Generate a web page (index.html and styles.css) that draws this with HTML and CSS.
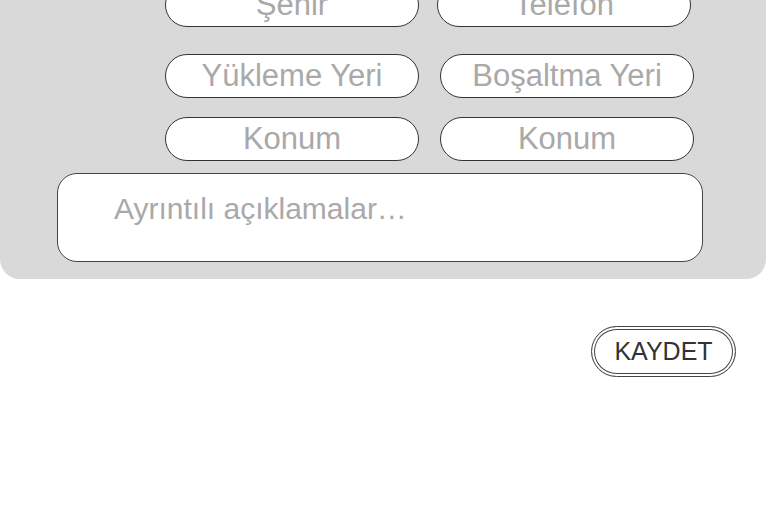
FILE: index.html
```html
<!DOCTYPE html>
<html lang="tr">
<head>
    <meta charset="UTF-8">
    <meta name="viewport" content="width=device-width, initial-scale=1.0">
    <title>Yük Kaydı</title>
    <link rel="stylesheet" href="styles.css">
</head>
<body>
    <!-- Form panel, scrolled so the first row is cut off at the top -->
    <div class="panel">
        <div class="pill-row first">
            <div class="pill">Şehir</div>
            <div class="pill">Telefon</div>
        </div>
        <div class="pill-row second">
            <div class="pill">Yükleme Yeri</div>
            <div class="pill">Boşaltma Yeri</div>
        </div>
        <div class="pill-row third">
            <div class="pill">Konum</div>
            <div class="pill">Konum</div>
        </div>
        <div class="details">Ayrıntılı açıklamalar…</div>
    </div>

    <div class="actions">
        <button class="save-btn">KAYDET</button>
    </div>
</body>
</html>
```

FILE: styles.css
```css
body {
    font-family: "Liberation Sans", Arial, sans-serif;
    margin: 0;
    padding: 0;
    background-color: #fff;
    overflow: hidden;
}

.panel {
    width: 766px;
    margin-top: -37px;
    padding: 20px 0 17px;
    box-sizing: border-box;
    background-color: #d9d9d9;
    border-radius: 0 0 20px 20px;
    display: flex;
    flex-direction: column;
}

.pill-row {
    display: flex;
    gap: 21px;
    padding-left: 165px;
}
.pill-row.first {
    gap: 18px;
}
.pill-row.second {
    margin-top: 27px;
}
.pill-row.third {
    margin-top: 19px;
}

.pill {
    width: 254px;
    height: 44px;
    box-sizing: border-box;
    border: 1px solid #333;
    border-radius: 22px;
    background-color: #fff;
    color: #a9a9a9;
    font-size: 31px;
    line-height: 41px;
    text-align: center;
}

.details {
    margin: 12px 0 0 57px;
    width: 646px;
    height: 89px;
    box-sizing: border-box;
    padding: 18px 0 0 56px;
    border: 1px solid #444;
    border-radius: 20px;
    background-color: #fff;
    color: #a9a9a9;
    font-size: 30px;
}

.actions {
    display: flex;
    justify-content: flex-end;
    padding: 47px 32px 0 0;
}

.save-btn {
    width: 145px;
    height: 51px;
    border: 1px solid #444;
    border-radius: 26px;
    background-color: #fff;
    box-shadow: inset 0 0 0 2px #fff, inset 0 0 0 3px #444;
    font-family: "Liberation Sans", Arial, sans-serif;
    font-size: 25px;
    color: #333;
    padding: 0;
}
```
